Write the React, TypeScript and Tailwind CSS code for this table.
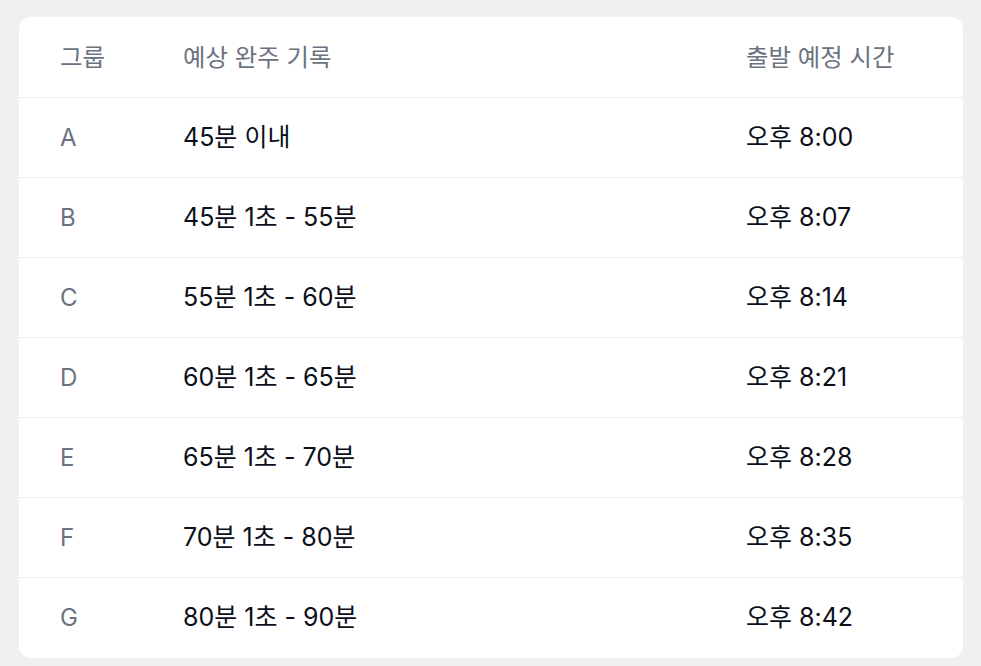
import React from 'react';

const rows = [
  { group: 'A', record: '45분 이내', time: '오후 8:00' },
  { group: 'B', record: '45분 1초 - 55분', time: '오후 8:07' },
  { group: 'C', record: '55분 1초 - 60분', time: '오후 8:14' },
  { group: 'D', record: '60분 1초 - 65분', time: '오후 8:21' },
  { group: 'E', record: '65분 1초 - 70분', time: '오후 8:28' },
  { group: 'F', record: '70분 1초 - 80분', time: '오후 8:35' },
  { group: 'G', record: '80분 1초 - 90분', time: '오후 8:42' },
];

const App: React.FC = () => {
  return (
    <div
      className="min-h-[666px] bg-[#eef0f2] pt-[17px] pl-[19px] pr-[18px] pb-[8px]"
      style={{ fontFamily: 'Inter, "Noto Sans CJK KR", sans-serif' }}
    >
      <div className="bg-white rounded-[12px] overflow-hidden">
        {/* header */}
        <div className="grid grid-cols-[123px_563px_1fr] items-center h-[81px] pl-[41px] border-b border-[#eceef0] text-[24.4px] text-[#6b7280]">
          <div>그룹</div>
          <div>예상 완주 기록</div>
          <div>출발 예정 시간</div>
        </div>
        {rows.map((r, i) => (
          <div
            key={r.group}
            className={`grid grid-cols-[123px_563px_1fr] items-center h-[80px] pl-[41px] text-[25px] ${
              i < rows.length - 1 ? 'border-b border-[#eceef0]' : ''
            }`}
          >
            <div className="text-[24px] text-[#6b7280]">{r.group}</div>
            <div className="text-[#0b0f19]">{r.record}</div>
            <div className="text-[#0b0f19]">{r.time}</div>
          </div>
        ))}
      </div>
    </div>
  );
};

export default App;
